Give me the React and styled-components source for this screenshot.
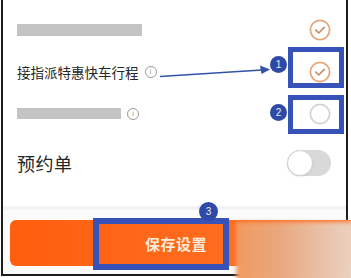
import React from "react";
import styled, { createGlobalStyle } from "styled-components";

const GlobalStyle = createGlobalStyle`
  html, body {
    margin: 0;
    padding: 0;
    background: #ffffff;
  }
  body {
    font-family: "Noto Sans CJK SC", "Noto Sans", sans-serif;
  }
`;

const Page = styled.div`
  position: relative;
  width: 351px;
  height: 278px;
  overflow: hidden;
  background: #ffffff;
`;

const Frame = styled.div`
  margin-left: 1px;
  width: 343px;
  height: 274px;
  border-left: 2px solid #1c1c1c;
  border-right: 2px solid #1c1c1c;
  border-bottom: 2px solid #1c1c1c;
  display: flex;
  flex-direction: column;
  background: #ffffff;
`;

const List = styled.div`
  padding-top: 9px;
  display: flex;
  flex-direction: column;
`;

const Row = styled.div`
  height: ${(p) => p.h || 42}px;
  display: flex;
  align-items: center;
  justify-content: space-between;
  padding: 0 15px 0 14px;
`;

const Label = styled.div`
  display: flex;
  align-items: center;
  gap: 6px;
  color: #262626;
  font-size: ${(p) => (p.big ? 18 : 13.5)}px;
  letter-spacing: ${(p) => (p.big ? 0.5 : 0)}px;
  white-space: nowrap;
`;

const Blur = styled.div`
  width: ${(p) => p.w}px;
  height: ${(p) => p.hgt || 11}px;
  background: #c4c4c4;
`;

const Info = styled.span`
  width: 10px;
  height: 10px;
  border: 1px solid #9a9a9a;
  border-radius: 50%;
  color: #8a8a8a;
  font-size: 7px;
  line-height: 10px;
  text-align: center;
  font-family: "DejaVu Sans", sans-serif;
  box-sizing: content-box;
`;

const Toggle = styled.div`
  width: 44px;
  height: 26px;
  border-radius: 13px;
  background: #d9d9d9;
  display: flex;
  align-items: center;
  box-sizing: border-box;

  &::before {
    content: "";
    width: 26px;
    height: 26px;
    border-radius: 50%;
    background: #ffffff;
    border: 1px solid #d2d2d2;
    box-sizing: border-box;
    box-shadow: 0 1px 2px rgba(0, 0, 0, 0.08);
  }
`;

const Footer = styled.div`
  flex: 1;
  margin-top: 14px;
  background: #fbfbfc;
  border-top: 4px solid #f3f2f6;
  padding: 10px 0 0 7px;
`;

const SaveButton = styled.button`
  width: 350px;
  height: 46px;
  border: none;
  border-radius: 6px;
  background: linear-gradient(90deg, #ff5e0e 0%, #ff6c1f 60%, #ff7a34 100%);
  color: #fcebd8;
  font-family: "Noto Sans CJK SC", sans-serif;
  font-size: 15px;
  font-weight: 600;
  letter-spacing: 0.5px;
  display: flex;
  align-items: center;
  padding-left: 135px;
`;

const Overlay = styled.div`
  position: absolute;
  left: ${(p) => p.x}px;
  top: ${(p) => p.y}px;
`;

const Box = styled(Overlay)`
  width: ${(p) => p.w}px;
  height: ${(p) => p.h}px;
  border: ${(p) => p.t || 5}px solid #3752b9;
  box-sizing: border-box;
`;

const Badge = styled(Overlay)`
  width: ${(p) => p.d || 17}px;
  height: ${(p) => p.d || 17}px;
  border-radius: 50%;
  background: #2f4aa6;
  color: #e8ecff;
  font-family: "Liberation Sans", sans-serif;
  font-size: 10px;
  line-height: ${(p) => p.d || 17}px;
  text-align: center;
`;

const Smudge = styled(Overlay)`
  width: 118px;
  height: 60px;
  background: linear-gradient(
    90deg,
    #f29a5f 0%,
    #eaa67c 35%,
    #e9bfa4 70%,
    #ecd2c2 100%
  );
  filter: blur(2px);
`;

const Check = ({ on }) => (
  <svg width="22" height="22" viewBox="0 0 22 22">
    <circle
      cx="11"
      cy="11"
      r="9.6"
      fill="#fff"
      stroke={on ? "#e9a77c" : "#d4d4d4"}
      strokeWidth="1.8"
    />
    {on && (
      <path
        d="M6.8 11.2 L9.8 14 L15.2 8.4"
        fill="none"
        stroke="#c48e6a"
        strokeWidth="1.7"
        strokeLinecap="round"
        strokeLinejoin="round"
      />
    )}
  </svg>
);

const Arrow = () => (
  <svg width="120" height="20" viewBox="0 0 120 20">
    <path d="M2 14.5 L104 8" stroke="#3352a8" strokeWidth="1.6" fill="none" />
    <path d="M112 7.5 L102 3.5 L103.5 12 Z" fill="#3352a8" />
  </svg>
);

const App = () => {
  return (
    <Page>
      <GlobalStyle />
      <Frame>
        <List>
          <Row>
            <Label>
              <Blur w={125} hgt={12} />
            </Label>
            <Check on />
          </Row>
          <Row>
            <Label>
              接指派特惠快车行程
              <Info>i</Info>
            </Label>
            <Check on />
          </Row>
          <Row h={41}>
            <Label>
              <Blur w={104} />
              <Info>i</Info>
            </Label>
            <Check />
          </Row>
          <Row h={58}>
            <Label big>预约单</Label>
            <Toggle />
          </Row>
        </List>
        <Footer>
          <SaveButton>保存设置</SaveButton>
        </Footer>
      </Frame>

      <Overlay x={158} y={62}>
        <Arrow />
      </Overlay>
      <Box x={288} y={47} w={56} h={41} />
      <Badge x={270} y={56}>1</Badge>
      <Box x={288} y={95} w={56} h={39} />
      <Badge x={270} y={104}>2</Badge>
      <Box x={93} y={218} w={136} h={52} t={6} />
      <Badge x={199} y={202} d={19}>3</Badge>
      <Smudge x={236} y={222} />
    </Page>
  );
};

export default App;
